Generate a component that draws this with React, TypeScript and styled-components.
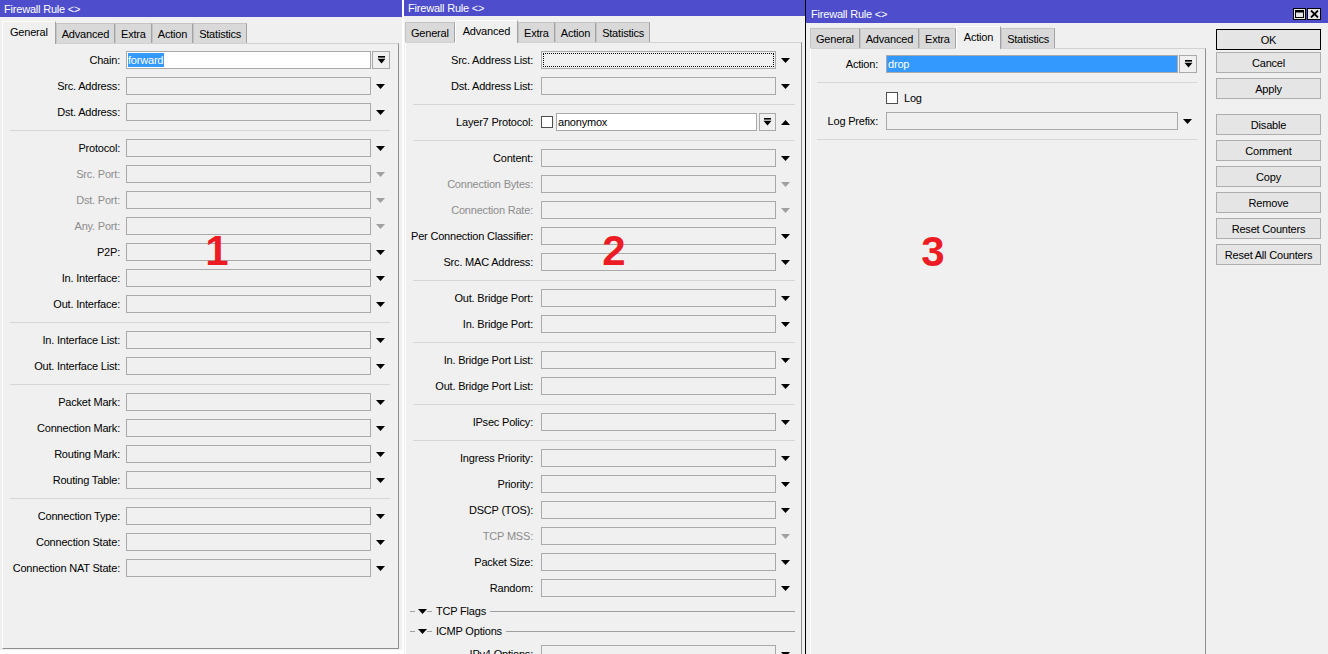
import React from "react";
import styled, { createGlobalStyle } from "styled-components";

const GlobalStyle = createGlobalStyle`
  html, body { margin: 0; padding: 0; background: #fff; }
  body {
    font-family: "Liberation Sans", Arial, sans-serif;
    font-size: 11px;
    letter-spacing: -0.2px;
    color: #000;
  }
  #root { width: 1328px; height: 654px; overflow: hidden; }
`;

const Desktop = styled.div`
  display: flex;
  align-items: flex-start;
  width: 1328px;
  height: 654px;
  overflow: hidden;
  background: #fff;
`;

const Window = styled.section<{ $w: number; $h: number; $edge?: string; $mr?: number }>`
  width: ${(p) => p.$w}px;
  height: ${(p) => p.$h}px;
  margin-right: ${(p) => p.$mr ?? 0}px;
  flex: none;
  display: flex;
  flex-direction: column;
  background: #f0f0f0;
  box-sizing: border-box;
  border-left: ${(p) => (p.$edge ? `1px solid ${p.$edge}` : "none")};
  overflow: hidden;
`;

const TitleBar = styled.header<{ $h: number; $pt: number; $pl: number }>`
  height: ${(p) => p.$h}px;
  flex: none;
  box-sizing: border-box;
  padding: ${(p) => p.$pt}px 7px 0 ${(p) => p.$pl}px;
  background: #4e4ecd;
  color: #fff;
  display: flex;
  align-items: center;
  white-space: nowrap;
`;

const CaptionButtons = styled.div`
  margin-left: auto;
  display: flex;
  gap: 1px;
`;

const CaptionBtn = styled.div<{ $w: number }>`
  width: ${(p) => p.$w}px;
  height: 12px;
  box-sizing: border-box;
  background: #e6e6e6;
  border: 1px solid #000;
  display: flex;
  align-items: center;
  justify-content: center;
`;

const Body = styled.div<{ $pl: number; $pr: number; $pb?: number }>`
  flex: 1;
  min-height: 0;
  display: flex;
  padding: 0 ${(p) => p.$pr}px ${(p) => p.$pb ?? 0}px ${(p) => p.$pl}px;
`;

const Pane = styled.div<{ $w?: number }>`
  display: flex;
  flex-direction: column;
  min-height: 0;
  flex: ${(p) => (p.$w ? "none" : "1")};
  width: ${(p) => (p.$w ? `${p.$w}px` : "auto")};
`;

const TabStrip = styled.div<{ $pt: number }>`
  display: flex;
  align-items: flex-end;
  padding-top: ${(p) => p.$pt}px;
  flex: none;
`;

const Tab = styled.div<{ $active?: boolean }>`
  height: ${(p) => (p.$active ? 23 : 20)}px;
  margin-bottom: ${(p) => (p.$active ? -1 : 0)}px;
  padding: 0 ${(p) => (p.$active ? 7 : 5)}px ${(p) => (p.$active ? 3 : 0)}px;
  box-sizing: border-box;
  display: flex;
  align-items: center;
  white-space: nowrap;
  background: ${(p) => (p.$active ? "#f0f0f0" : "#d9d9d9")};
  border-top: 1px solid ${(p) => (p.$active ? "#fff" : "#c4c4c4")};
  border-left: 1px solid ${(p) => (p.$active ? "#fff" : "#c4c4c4")};
  border-right: 1px solid #a3a3a3;
  position: relative;
  z-index: ${(p) => (p.$active ? 2 : 0)};
`;

const Frame = styled.div<{ $lw: number; $g: number; $pl: number; $pr: number; $pt: number; $closed?: boolean }>`
  --lw: ${(p) => p.$lw}px;
  --g: ${(p) => p.$g}px;
  position: relative;
  flex: 1;
  min-height: 0;
  overflow: hidden;
  box-sizing: border-box;
  padding: ${(p) => p.$pt}px ${(p) => p.$pr}px 0 ${(p) => p.$pl}px;
  border-top: 1px solid #d2d2d2;
  border-left: 1px solid #fff;
  border-right: 1px solid #8f8f8f;
  border-bottom: ${(p) => (p.$closed ? "1px solid #8f8f8f" : "none")};
`;

const Row = styled.div<{ $h?: number }>`
  display: flex;
  align-items: center;
  height: ${(p) => p.$h ?? 26}px;
`;

const Label = styled.label<{ $dim?: boolean }>`
  width: var(--lw);
  margin-right: var(--g);
  flex: none;
  display: flex;
  justify-content: flex-end;
  white-space: nowrap;
  color: ${(p) => (p.$dim ? "#8d8d8d" : "#000")};
`;

const FieldCell = styled.div`
  flex: 1;
  min-width: 0;
  display: flex;
  align-items: center;
  gap: 2px;
`;

type Tone = "plain" | "white" | "selected";

const Input = styled.div<{ $tone: Tone; $focus?: boolean }>`
  flex: 1;
  min-width: 0;
  height: 18px;
  box-sizing: border-box;
  border: 1px solid #a9a9a9;
  background: ${(p) => (p.$tone === "white" ? "#fff" : p.$tone === "selected" ? "#3399ff" : "#f0f0f0")};
  color: ${(p) => (p.$tone === "selected" ? "#fff" : "#000")};
  display: flex;
  align-items: center;
  padding-left: 1px;
  overflow: hidden;
  white-space: nowrap;
  outline: ${(p) => (p.$focus ? "1px dotted #000" : "none")};
  outline-offset: -3px;
`;

const Highlight = styled.span`
  background: #3399ff;
  color: #fff;
  line-height: 14px;
  padding-right: 1px;
`;

const ArrowCell = styled.div`
  width: 19px;
  flex: none;
  display: flex;
  align-items: center;
  justify-content: center;
`;

const ComboButton = styled.div<{ $w: number; $ml?: number }>`
  width: ${(p) => p.$w}px;
  height: 18px;
  margin-left: ${(p) => p.$ml ?? 0}px;
  flex: none;
  box-sizing: border-box;
  border: 1px solid #a9a9a9;
  background: #f0f0f0;
  display: flex;
  align-items: center;
  justify-content: center;
`;

const Check = styled.span`
  width: 12px;
  height: 12px;
  box-sizing: border-box;
  border: 1px solid #4d4d4d;
  background: #fff;
  flex: none;
  margin-right: 1px;
`;

const CheckText = styled.span`
  margin-left: 3px;
`;

const Separator = styled.div`
  height: 0;
  margin: 5px 0 4px;
  border-top: 1px solid #d6d6d6;
`;

const SectionRow = styled.div`
  display: flex;
  align-items: center;
  height: 20px;
  margin-left: -3px;
`;

const Dash = styled.span<{ $w: number }>`
  width: ${(p) => p.$w}px;
  height: 1px;
  background: #a0a0a0;
  flex: none;
`;

const SectionArrow = styled.span`
  display: flex;
  margin-left: 3px;
`;

const SectionTitle = styled.span`
  margin: 0 4px;
  white-space: nowrap;
`;

const SectionLine = styled.span`
  flex: 1;
  height: 1px;
  background: #a0a0a0;
`;

const Marker = styled.span<{ $x: number; $y: number }>`
  position: absolute;
  left: ${(p) => p.$x}px;
  top: ${(p) => p.$y}px;
  transform: translate(-50%, -50%);
  font-family: "Liberation Sans", Arial, sans-serif;
  font-weight: bold;
  font-size: 42px;
  line-height: 1;
  letter-spacing: 0;
  color: #ed1c24;
  pointer-events: none;
`;

const ButtonColumn = styled.div`
  display: flex;
  flex-direction: column;
  padding: 6px 0 0 10px;
  flex: none;
`;

const DlgButton = styled.button<{ $default?: boolean; $mb: number }>`
  width: 105px;
  height: 21px;
  margin: 0 0 ${(p) => p.$mb}px;
  padding: 0;
  box-sizing: border-box;
  border: 1px solid ${(p) => (p.$default ? "#000" : "#adadad")};
  background: #e5e5e5;
  color: #000;
  font: inherit;
  letter-spacing: inherit;
  white-space: nowrap;
`;

/* ---------- icons ---------- */

const Tri = ({ color = "#000", up = false }: { color?: string; up?: boolean }) => (
  <svg width="9" height="5" viewBox="0 0 9 5">
    <polygon points={up ? "0,5 9,5 4.5,0" : "0,0 9,0 4.5,5"} fill={color} />
  </svg>
);

const ComboIcon = () => (
  <svg width="9" height="8" viewBox="0 0 9 8">
    <rect x="1" y="0" width="7" height="1.6" fill="#000" />
    <polygon points="0.5,2.8 8.5,2.8 4.5,7.5" fill="#000" />
  </svg>
);

const MaxIcon = () => (
  <svg width="9" height="8" viewBox="0 0 9 8">
    <rect x="0.5" y="0.5" width="8" height="7" fill="none" stroke="#000" strokeWidth="1" />
    <rect x="0.5" y="0.5" width="8" height="2" fill="#000" />
  </svg>
);

const CloseIcon = () => (
  <svg width="9" height="8" viewBox="0 0 9 8">
    <path d="M1 0.5 L8 7.5 M8 0.5 L1 7.5" stroke="#000" strokeWidth="1.8" />
  </svg>
);

/* ---------- data ---------- */

type Item =
  | {
      t: "field";
      label: string;
      dim?: boolean;
      combo?: boolean;
      value?: string;
      tone?: Tone;
      highlight?: boolean;
      focus?: boolean;
      check?: boolean;
      inlineCombo?: boolean;
      up?: boolean;
    }
  | { t: "sep" }
  | { t: "section"; label: string }
  | { t: "check"; label: string };

const f = (label: string, extra: Partial<Extract<Item, { t: "field" }>> = {}): Item => ({ t: "field", label, ...extra });
const sep: Item = { t: "sep" };

const general: Item[] = [
  f("Chain:", { combo: true, value: "forward", tone: "white", highlight: true }),
  f("Src. Address:"),
  f("Dst. Address:"),
  sep,
  f("Protocol:"),
  f("Src. Port:", { dim: true }),
  f("Dst. Port:", { dim: true }),
  f("Any. Port:", { dim: true }),
  f("P2P:"),
  f("In. Interface:"),
  f("Out. Interface:"),
  sep,
  f("In. Interface List:"),
  f("Out. Interface List:"),
  sep,
  f("Packet Mark:"),
  f("Connection Mark:"),
  f("Routing Mark:"),
  f("Routing Table:"),
  sep,
  f("Connection Type:"),
  f("Connection State:"),
  f("Connection NAT State:"),
];

const advanced: Item[] = [
  f("Src. Address List:", { focus: true }),
  f("Dst. Address List:"),
  sep,
  f("Layer7 Protocol:", { check: true, value: "anonymox", tone: "white", inlineCombo: true, up: true }),
  sep,
  f("Content:"),
  f("Connection Bytes:", { dim: true }),
  f("Connection Rate:", { dim: true }),
  f("Per Connection Classifier:"),
  f("Src. MAC Address:"),
  sep,
  f("Out. Bridge Port:"),
  f("In. Bridge Port:"),
  sep,
  f("In. Bridge Port List:"),
  f("Out. Bridge Port List:"),
  sep,
  f("IPsec Policy:"),
  sep,
  f("Ingress Priority:"),
  f("Priority:"),
  f("DSCP (TOS):"),
  f("TCP MSS:", { dim: true }),
  f("Packet Size:"),
  f("Random:"),
  { t: "section", label: "TCP Flags" },
  { t: "section", label: "ICMP Options" },
  f("IPv4 Options:"),
];

const action: Item[] = [
  f("Action:", { combo: true, value: "drop", tone: "selected" }),
  sep,
  { t: "check", label: "Log" },
  f("Log Prefix:"),
  sep,
];

const TABS = ["General", "Advanced", "Extra", "Action", "Statistics"];

const BUTTONS: { label: string; mb: number; def?: boolean }[] = [
  { label: "OK", mb: 2, def: true },
  { label: "Cancel", mb: 5 },
  { label: "Apply", mb: 15 },
  { label: "Disable", mb: 5 },
  { label: "Comment", mb: 5 },
  { label: "Copy", mb: 5 },
  { label: "Remove", mb: 5 },
  { label: "Reset Counters", mb: 5 },
  { label: "Reset All Counters", mb: 5 },
];

/* ---------- rendering ---------- */

function renderItem(item: Item, i: number) {
  if (item.t === "sep") return <Separator key={i} />;
  if (item.t === "section")
    return (
      <SectionRow key={i}>
        <Dash $w={5} />
        <SectionArrow>
          <Tri />
        </SectionArrow>
        <Dash $w={5} />
        <SectionTitle>{item.label}</SectionTitle>
        <SectionLine />
      </SectionRow>
    );
  if (item.t === "check")
    return (
      <Row key={i} $h={21}>
        <Label />
        <FieldCell>
          <Check />
          <CheckText>{item.label}</CheckText>
        </FieldCell>
        <ArrowCell />
      </Row>
    );
  const tone: Tone = item.tone ?? "plain";
  return (
    <Row key={i}>
      <Label $dim={item.dim}>{item.label}</Label>
      <FieldCell>
        {item.check && <Check />}
        <Input $tone={tone} $focus={item.focus}>
          {item.value && (item.highlight ? <Highlight>{item.value}</Highlight> : item.value)}
        </Input>
        {item.inlineCombo && (
          <ComboButton $w={17}>
            <ComboIcon />
          </ComboButton>
        )}
      </FieldCell>
      <ArrowCell>
        {item.combo ? (
          <ComboButton $w={18} $ml={1}>
            <ComboIcon />
          </ComboButton>
        ) : (
          <Tri color={item.dim ? "#a0a0a0" : "#000"} up={item.up} />
        )}
      </ArrowCell>
    </Row>
  );
}

function Tabs({ active, pt }: { active: string; pt: number }) {
  return (
    <TabStrip $pt={pt}>
      {TABS.map((t) => (
        <Tab key={t} $active={t === active}>
          {t}
        </Tab>
      ))}
    </TabStrip>
  );
}

export default function App() {
  return (
    <>
      <GlobalStyle />
      <Desktop>
        {/* Window 1 - General */}
        <Window $w={402} $h={650} $mr={1}>
          <TitleBar $h={17} $pt={0} $pl={4}>
            Firewall Rule &lt;&gt;
          </TitleBar>
          <Body $pl={2} $pr={3} $pb={1}>
            <Pane>
              <Tabs active="General" pt={4} />
              <Frame $lw={110} $g={6} $pl={7} $pr={8} $pt={3} $closed>
                {general.map(renderItem)}
                <Marker $x={214} $y={207}>1</Marker>
              </Frame>
            </Pane>
          </Body>
        </Window>

        {/* Window 2 - Advanced */}
        <Window $w={402} $h={654} $edge="#ffffff">
          <TitleBar $h={16} $pt={0} $pl={4}>
            Firewall Rule &lt;&gt;
          </TitleBar>
          <Body $pl={1} $pr={3}>
            <Pane>
              <Tabs active="Advanced" pt={4} />
              <Frame $lw={120} $g={8} $pl={7} $pr={6} $pt={4}>
                {advanced.map(renderItem)}
                <Marker $x={208} $y={208}>2</Marker>
              </Frame>
            </Pane>
          </Body>
        </Window>

        {/* Window 3 - Action */}
        <Window $w={523} $h={654} $edge="#000000">
          <TitleBar $h={23} $pt={5} $pl={5}>
            Firewall Rule &lt;&gt;
            <CaptionButtons>
              <CaptionBtn $w={13}>
                <MaxIcon />
              </CaptionBtn>
              <CaptionBtn $w={14}>
                <CloseIcon />
              </CaptionBtn>
            </CaptionButtons>
          </TitleBar>
          <Body $pl={4} $pr={0}>
            <Pane $w={396}>
              <Tabs active="Action" pt={3} />
              <Frame $lw={61} $g={8} $pl={6} $pr={8} $pt={2}>
                {action.map(renderItem)}
                <Marker $x={122} $y={203}>3</Marker>
              </Frame>
            </Pane>
            <ButtonColumn>
              {BUTTONS.map((b) => (
                <DlgButton key={b.label} $default={b.def} $mb={b.mb}>
                  {b.label}
                </DlgButton>
              ))}
            </ButtonColumn>
          </Body>
        </Window>
      </Desktop>
    </>
  );
}
